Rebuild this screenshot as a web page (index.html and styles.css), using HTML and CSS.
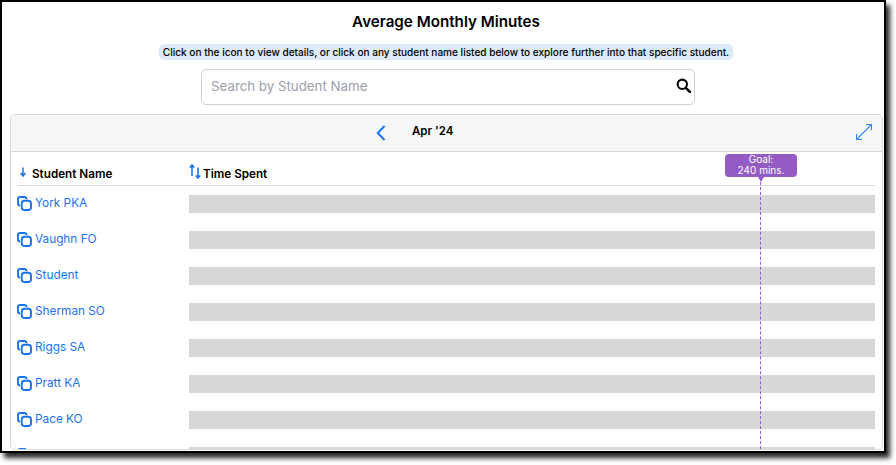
FILE: index.html
```html
<!DOCTYPE html>
<html lang="en">
<head>
<meta charset="utf-8">
<title>Average Monthly Minutes</title>
<link rel="stylesheet" href="styles.css">
</head>
<body>
<main class="frame">
  <h1 class="title">Average Monthly Minutes</h1>
  <div class="hint-row"><p class="hint">Click on the icon to view details, or click on any student name listed below to explore further into that specific student.</p></div>
  <div class="search">
    <span class="placeholder">Search by Student Name</span>
    <svg class="search-icon" viewBox="0 0 16 16" width="15" height="15"><circle cx="6.7" cy="6.7" r="5" fill="none" stroke="#000" stroke-width="2.2"/><path d="M10.5 10.5L15 15" stroke="#000" stroke-width="2.6" stroke-linecap="round"/></svg>
  </div>
  <section class="card">
    <header class="card-head">
      <svg class="chev" viewBox="0 0 10 16" width="10" height="16"><path d="M8.5 1L1.8 8l6.7 7" fill="none" stroke="#1a73f0" stroke-width="2"/></svg>
      <span class="month">Apr '24</span>
      <svg class="expand" viewBox="0 0 18 18" width="18" height="18"><path d="M1.5 16.5L16.5 1.5M11 1.5h5.5V7M1.5 11v5.5H7" fill="none" stroke="#2f86f0" stroke-width="1.1"/></svg>
    </header>
    <div class="table">
      <div class="goal">
        <div class="goal-badge">Goal:<br>240 mins.</div>
        <div class="goal-line"></div>
      </div>
      <div class="thead">
        <div class="th th-name">
          <svg class="sort-down" viewBox="0 0 8 10" width="8" height="10"><path d="M4 0.5V9M1.5 6L4 9l2.5-3" fill="none" stroke="#1a73f0" stroke-width="1.5"/></svg>
          <span>Student Name</span>
        </div>
        <div class="th th-time">
          <svg class="sort-both" viewBox="0 0 12 15" width="12" height="15"><path d="M3 12V1M0.8 3.5L3 1l2.2 2.5M9 3.5V14M6.8 11.5L9 14l2.2-2.5" fill="none" stroke="#1a73f0" stroke-width="1.6"/></svg>
          <span>Time Spent</span>
        </div>
      </div>
      <div class="rows">
        <div class="row"><a class="name"><svg class="copy" viewBox="0 0 15 15" width="15" height="15"><use href="#c"/></svg>York PKA</a><div class="bar"></div></div>
        <div class="row"><a class="name"><svg class="copy" viewBox="0 0 15 15" width="15" height="15"><use href="#c"/></svg>Vaughn FO</a><div class="bar"></div></div>
        <div class="row"><a class="name"><svg class="copy" viewBox="0 0 15 15" width="15" height="15"><use href="#c"/></svg>Student</a><div class="bar"></div></div>
        <div class="row"><a class="name"><svg class="copy" viewBox="0 0 15 15" width="15" height="15"><use href="#c"/></svg>Sherman SO</a><div class="bar"></div></div>
        <div class="row"><a class="name"><svg class="copy" viewBox="0 0 15 15" width="15" height="15"><use href="#c"/></svg>Riggs SA</a><div class="bar"></div></div>
        <div class="row"><a class="name"><svg class="copy" viewBox="0 0 15 15" width="15" height="15"><use href="#c"/></svg>Pratt KA</a><div class="bar"></div></div>
        <div class="row"><a class="name"><svg class="copy" viewBox="0 0 15 15" width="15" height="15"><use href="#c"/></svg>Pace KO</a><div class="bar"></div></div>
        <div class="row"><a class="name"><svg class="copy" viewBox="0 0 15 15" width="15" height="15"><use href="#c"/></svg></a><div class="bar"></div></div>
      </div>
    </div>
  </section>
</main>
<svg class="defs" width="0" height="0"><defs><g id="c" fill="none" stroke="#1a73f0" stroke-width="1.9"><path d="M9.5 3.2V3A2.1 2.1 0 0 0 7.4 1H3.1A2.2 2.2 0 0 0 1 3.2V7.4A2.1 2.1 0 0 0 3.1 9.5"/><rect x="4.7" y="4.7" width="9.3" height="9.3" rx="2.8"/></g></defs></svg>
</body>
</html>
```
FILE: styles.css
```css
* { box-sizing: border-box; }
html, body { margin: 0; padding: 0; background: #fff; height: 465px; overflow: hidden; }
body { font-family: "Inter", "Liberation Sans", sans-serif; color: #000; }
.defs { position: absolute; }
.frame {
  width: 886px; height: 453px; border: 2px solid #000; background: #fff;
  display: flex; flex-direction: column; align-items: center;
  padding: 11px 0 0 8px; overflow: hidden;
  box-shadow: 4px 5px 5px rgba(0,0,0,.85);
}
.title { margin: 0 2px 0 0; font-size: 15.2px; line-height: 18px; font-weight: 600; }
.hint-row { margin: 13px 2px 0 0; }
.hint { margin: 0; background: #deebf7; border-radius: 5px; font-size: 10.05px; font-weight: 500; line-height: 16px; padding: 0 4px; }
.search {
  width: 494px; height: 36px; margin: 9px -2px 0 0; border: 1px solid #d0d0d0; border-radius: 5px;
  display: flex; align-items: center; justify-content: space-between; padding: 0 3px 0 9px;
}
.placeholder { font-size: 13.3px; color: #9aa0ab; margin-top: -3px; }
.search-icon { margin-top: -4px; }
.card {
  width: 873px; height: 336px; margin: 9px 0 0 0; align-self: flex-start;
  border: 1px solid #d8d8d8; border-radius: 5px; overflow: hidden; flex: none;
}
.card-head {
  height: 37px; background: #f6f7f9; border-bottom: 1px solid #d8d8d8;
  display: flex; align-items: center; padding: 0 9px 0 365px;
}
.chev { margin-top: 0; }
.month { font-size: 11.5px; font-weight: 600; margin-left: 26px; margin-top: -5px; }
.expand { margin-left: auto; margin-top: -2px; }
.table { position: relative; padding: 0 7px 0 6px; }
.goal { position: absolute; left: 714px; top: 2px; width: 72px; display: flex; flex-direction: column; align-items: center; z-index: 2; height: 300px; }
.goal-badge {
  width: 72px; height: 23px; background: #945bc4; color: #fff; border-radius: 4px;
  font-size: 10px; line-height: 11px; text-align: center; position: relative;
}
.goal-badge::after {
  content: ""; position: absolute; left: 33px; bottom: -5px;
  border-left: 3px solid transparent; border-right: 3px solid transparent; border-top: 5px solid #945bc4;
}
.goal-line { border-left: 1px dashed #9a55d6; flex: 1; margin-left: -1px; }
.thead { display: flex; height: 34px; border-bottom: 1px solid #dcdcdc; align-items: flex-end; padding-bottom: 4px; }
.th { display: flex; align-items: flex-end; font-size: 11.7px; font-weight: 600; line-height: 14px; }
.th-name { width: 172px; }
.sort-down { margin: 0 5px 4px 2px; }
.th-time svg { margin: 0 2px 2px 0; }
.rows { display: flex; flex-direction: column; }
.row { display: flex; height: 36px; flex: none; padding-top: 9px; }
.name { width: 172px; display: flex; align-items: flex-start; color: #1a73f0; font-size: 11.8px; line-height: 14px; padding-top: 1px; }
.copy { margin: 0 3px 0 0; flex: none; }
.bar { flex: 1; height: 18px; background: #d8d8d8; }
```
